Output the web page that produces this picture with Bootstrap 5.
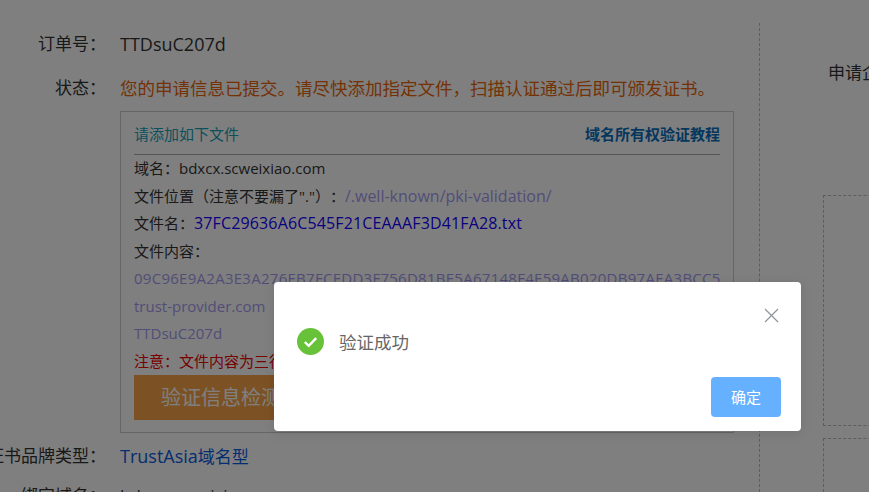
<!DOCTYPE html>
<html lang="zh-CN">
<head>
<meta charset="utf-8">
<title>验证成功</title>
<link href="https://cdn.jsdelivr.net/npm/bootstrap@5.3.0/dist/css/bootstrap.min.css" rel="stylesheet">
<style>
html,body{height:492px;overflow:hidden}
body{background:#fff;color:#333;font-family:"Open Sans","Noto Sans CJK SC",sans-serif;font-size:17px;position:relative;text-spacing-trim:space-all}
.pg-wrap{height:492px;overflow:hidden;padding-top:23px}
.left-pane{width:760px;flex:none;border-right:1px dashed #bbb;height:469px}
.right-pane{flex:none;width:109px;padding-left:63px;overflow:hidden}
.apply-lbl{margin:40px 0 0 5px;white-space:nowrap;line-height:20px;height:20px;width:200px}
.dash-a{border:1px dashed #bbb;width:200px;height:231px;margin-top:112px}
.dash-b{border:1px dashed #bbb;width:200px;height:100px;margin-top:12px}
.row-line{display:flex;line-height:24px}
.lbl{width:106px;flex:none;display:flex;justify-content:flex-end;white-space:nowrap}
.val{margin-left:14px;white-space:nowrap}
.latin-lg{font-size:18px}
.order-row{margin-top:9px}
.state-row{margin-top:20px}
.st-text{color:#e8650a;font-size:17.5px}
.info-box{margin:11px 0 0 120px;width:614px;height:322px;border:1px solid #ccc;padding:10px 13px;font-size:15px;overflow:hidden}
.box-head{height:33px;border-bottom:1px solid #aaa;line-height:24px}
.teal{color:#17a2b8}
.tut{color:#0b6fbd;font-weight:700;font-size:15px}
.info-line{height:27.5px;line-height:27.5px;white-space:nowrap;overflow:hidden}
.pur{color:#a59bf0}
.hash-line{letter-spacing:.27px}
.wide-txt{font-size:16px}
.fn{color:#1500ff;letter-spacing:.14px}
.warn{color:#e00}
.check-btn{display:block;width:400px;height:45px;margin-top:0;background:#f9a54a;color:#fff;border:0;border-radius:0;font-size:20px;line-height:45px;padding:0 0 0 27px;text-align:left}
.brand-row{margin-top:11px}
.brand{color:#0a5be0}
.last-row{margin-top:15px}
.mask{position:absolute;inset:0;background:rgba(0,0,0,.5)}
.dlg{position:absolute;left:274px;top:282px;width:527px;height:149px;background:#fff;border-radius:4px;box-shadow:0 2px 12px rgba(0,0,0,.1);padding:0 20px 0 23px;font-family:"Noto Sans CJK SC","Open Sans",sans-serif}
.dlg-x{position:absolute;right:22px;top:18px;width:15px;height:15px;display:block;padding:0;border:0;background:none}
.dlg-body{padding-top:46px;color:#666;font-size:17.5px;gap:15px;height:95px;line-height:27px}
.dlg-ok{width:70px;height:40px;background:#66b1ff;border:0;color:#fff;font-size:15px;border-radius:4px;padding:0}
</style>
</head>
<body>
<div class="pg-wrap d-flex">
  <div class="left-pane">
    <div class="row-line order-row"><div class="lbl">订单号：</div><div class="val latin-lg">TTDsuC207d</div></div>
    <div class="row-line state-row"><div class="lbl">状态：</div><div class="val st-text">您的申请信息已提交。请尽快添加指定文件，扫描认证通过后即可颁发证书。</div></div>
    <div class="info-box">
      <div class="box-head d-flex justify-content-between"><span class="teal">请添加如下文件</span><span class="tut">域名所有权验证教程</span></div>
      <div class="info-line">域名：bdxcx.scweixiao.com</div>
      <div class="info-line">文件位置（注意不要漏了"."）：<span class="pur wide-txt">/.well-known/pki-validation/</span></div>
      <div class="info-line">文件名：<span class="fn wide-txt">37FC29636A6C545F21CEAAAF3D41FA28.txt</span></div>
      <div class="info-line">文件内容：</div>
      <div class="info-line pur hash-line">09C96E9A2A3E3A276EB7FCEDD3F756D81BE5A67148F4E59AB020DB97AEA3BCC5</div>
      <div class="info-line pur">trust-provider.com</div>
      <div class="info-line pur">TTDsuC207d</div>
      <div class="info-line warn">注意：文件内容为三行，请勿修改</div>
      <button type="button" class="btn check-btn">验证信息检测</button>
    </div>
    <div class="row-line brand-row"><div class="lbl">证书品牌类型：</div><div class="val brand"><span class="latin-lg">TrustAsia</span>域名型</div></div>
    <div class="row-line last-row"><div class="lbl">绑定域名：</div><div class="val">bdxcx.scweixiao.com</div></div>
  </div>
  <div class="right-pane">
    <div class="apply-lbl">申请企业</div>
    <div class="dash-a"></div>
    <div class="dash-b"></div>
  </div>
</div>
<div class="mask"></div>
<div class="dlg" role="dialog">
  <button type="button" class="dlg-x" aria-label="关闭"><svg width="15" height="15" viewBox="0 0 15 15"><path d="M1 1L14 14M14 1L1 14" stroke="#909399" stroke-width="1.2" fill="none"/></svg></button>
  <div class="dlg-body d-flex align-items-start">
    <svg width="27" height="27" viewBox="0 0 27 27"><circle cx="13.5" cy="13.5" r="13.5" fill="#67c23a"/><path d="M7.8 14l3.9 3.8 7.5-7.6" stroke="#fff" stroke-width="2.4" fill="none"/></svg>
    <span>验证成功</span>
  </div>
  <div class="d-flex justify-content-end"><button type="button" class="btn dlg-ok">确定</button></div>
</div>
</body>
</html>
